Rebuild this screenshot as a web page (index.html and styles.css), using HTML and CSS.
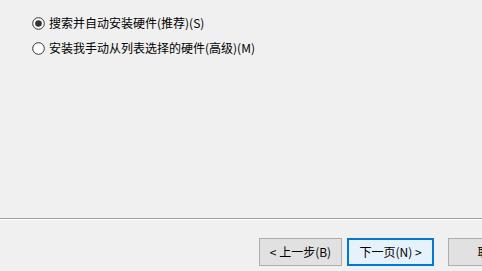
FILE: index.html
```html
<!DOCTYPE html>
<html lang="zh-CN">
<head>
  <meta charset="UTF-8" />
  <title>添加硬件</title>
  <link rel="stylesheet" href="styles.css">
</head>
<body>
  <div class="wizard">
    <!-- 选项 -->
    <div class="options">
      <label class="option">
        <svg class="radio" width="13" height="13" viewBox="0 0 13 13">
          <circle cx="6.5" cy="6.5" r="5.8" fill="#fff" stroke="#333" stroke-width="1"/>
          <circle cx="6.5" cy="6.5" r="3.3" fill="#333"/>
        </svg>
        <span>搜索并自动安装硬件(推荐)(S)</span>
      </label>
      <label class="option">
        <svg class="radio" width="13" height="13" viewBox="0 0 13 13">
          <circle cx="6.5" cy="6.5" r="5.8" fill="#fff" stroke="#333" stroke-width="1"/>
        </svg>
        <span>安装我手动从列表选择的硬件(高级)(M)</span>
      </label>
    </div>

    <!-- 按钮 -->
    <div class="footer">
      <button class="btn">&lt; 上一步(B)</button>
      <button class="btn default">下一页(N) &gt;</button>
      <button class="btn cancel">取消</button>
    </div>
  </div>
</body>
</html>
```

FILE: styles.css
```css
/* 全体 */
html, body {
  margin: 0;
  padding: 0;
  background: #f0f0f0;
  font-family: "Microsoft YaHei", "Noto Sans CJK SC", sans-serif;
  font-size: 12px;
  color: #000;
  overflow: hidden;
}
.wizard {
  width: 482px;
  height: 271px;
  display: flex;
  flex-direction: column;
}

/* 选项 */
.options {
  height: 218px;
  box-sizing: border-box;
  padding: 14px 0 0 32px;
  display: flex;
  flex-direction: column;
  gap: 7px;
}
.option {
  display: flex;
  align-items: center;
  gap: 4px;
  height: 18px;
  line-height: 18px;
}
.radio {
  flex: none;
}

/* 底部 */
.footer {
  border-top: 1px solid #a0a0a0;
  box-shadow: inset 0 1px 0 #fff;
  flex: 1;
  display: flex;
  align-items: flex-start;
  padding: 19px 0 0 259px;
  gap: 5px;
}
.btn {
  flex: none;
  width: 83px;
  height: 28px;
  background: #e1e1e1;
  border: 1px solid #adadad;
  font-family: inherit;
  font-size: 12px;
  color: #000;
  padding: 0 0 1px;
}
.btn.default {
  width: 87px;
  background: #e5f1fb;
  border: 2px solid #0078d7;
}
.btn.cancel {
  margin-left: 9px;
}
```
